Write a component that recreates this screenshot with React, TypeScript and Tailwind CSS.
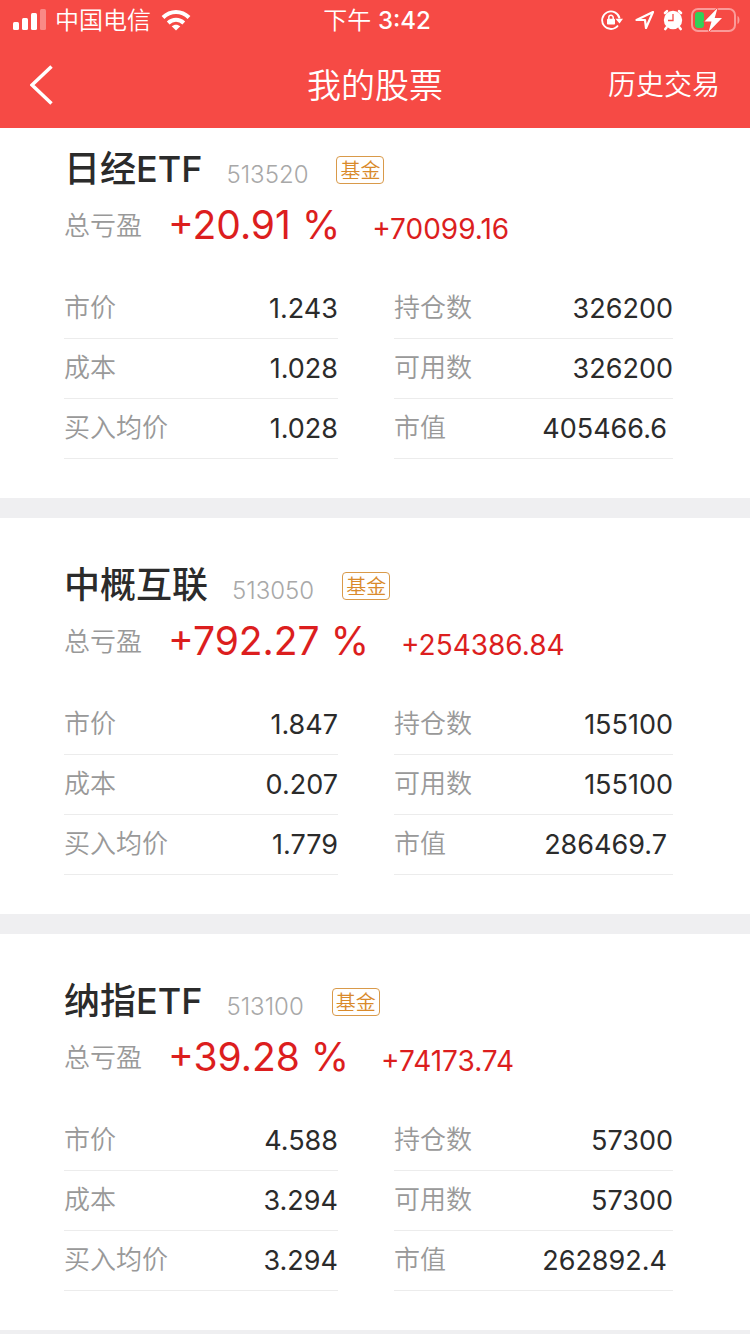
import React from 'react';

type Holding = {
  name: string;
  code: string;
  percent: string;
  profit: string;
  price: string;
  cost: string;
  average: string;
  position: string;
  available: string;
  value: string;
};

const holdings: Holding[] = [
  {
    name: '日经ETF', code: '513520', percent: '+20.91 %', profit: '+70099.16',
    price: '1.243', cost: '1.028', average: '1.028',
    position: '326200', available: '326200', value: '405466.6',
  },
  {
    name: '中概互联', code: '513050', percent: '+792.27 %', profit: '+254386.84',
    price: '1.847', cost: '0.207', average: '1.779',
    position: '155100', available: '155100', value: '286469.7',
  },
  {
    name: '纳指ETF', code: '513100', percent: '+39.28 %', profit: '+74173.74',
    price: '4.588', cost: '3.294', average: '3.294',
    position: '57300', available: '57300', value: '262892.4',
  },
];

const SignalIcon = () => (
  <svg width="34" height="22" viewBox="0 0 34 22" fill="#fff" aria-hidden="true">
    <rect x="0" y="13" width="6" height="8" rx="1.5" />
    <rect x="9" y="9" width="6" height="12" rx="1.5" />
    <rect x="18" y="4" width="6" height="17" rx="1.5" />
    <rect x="27" y="0" width="6" height="21" rx="1.5" opacity="0.35" />
  </svg>
);

const WifiIcon = () => (
  <svg width="30" height="22" viewBox="0 0 30 22" fill="none" stroke="#fff" strokeWidth="4" aria-hidden="true">
    <path d="M2 8.5C9.5 1.2 20.5 1.2 28 8.5" />
    <path d="M7.2 14C11.8 9.8 18.2 9.8 22.8 14" />
    <path d="M15 21.5l-4.3-4.3c2.5-2.1 6.1-2.1 8.6 0z" fill="#fff" stroke="none" />
  </svg>
);

const RotationLockIcon = () => (
  <svg width="22" height="20" viewBox="0 0 22 20" fill="none" stroke="#fff" strokeWidth="1.8" aria-hidden="true">
    <path d="M17 15.5A8.8 8.800 0 1 1 18.600 8.500" />
    <path d="M14.500 8.800h7.500l-3.500 4.600z" fill="#fff" stroke="none" />
    <rect x="6" y="8.800" width="8" height="5.800" rx="0.800" fill="#fff" stroke="none" />
    <path d="M7.800 9.500V7.500a2.200 2.200 0 0 1 4.400 0v2" strokeWidth="1.500" />
  </svg>
);

const LocationIcon = () => (
  <svg width="20" height="20" viewBox="0 0 20 20" fill="none" stroke="#fff" strokeWidth="2.2" strokeLinejoin="round" aria-hidden="true">
    <path d="M18 2L1.500 10h8.500l1 8z" />
  </svg>
);

const AlarmIcon = () => (
  <svg width="20" height="22" viewBox="0 0 20 22" aria-hidden="true">
    <circle cx="10" cy="11" r="9.2" fill="#fff" />
    <path d="M2 4L4 2.200M18 4L16 2.200M3.500 18.500l-1.200 1.500M16.500 18.500l1.200 1.500" stroke="#fff" strokeWidth="2.600" strokeLinecap="round" />
    <path d="M10 5V11.500H5" fill="none" stroke="#f64a45" strokeWidth="1.300" />
  </svg>
);

const BatteryIcon = () => (
  <svg width="50" height="24" viewBox="0 0 50 24" aria-hidden="true">
    <rect x="1" y="1" width="43" height="22" rx="6" fill="none" stroke="#fff" strokeWidth="2" opacity="0.45" />
    <path d="M46.500 8c2.600 1 2.600 7 0 8z" fill="#fff" opacity="0.45" />
    <rect x="4" y="4" width="9" height="16" rx="3" fill="#32d158" />
    <path d="M26.500 0L13.500 13.500h7L17.500 24 31 10h-7.300z" fill="#fff" stroke="#f64a45" strokeWidth="1.500" paintOrder="stroke" />
  </svg>
);

const StatusBar = () => (
  <div className="grid h-10 grid-cols-[1fr_auto_1fr] items-center pl-[13px] pr-[9px] text-[24px]">
    <div className="flex items-center">
      <SignalIcon />
      <span className="ml-2 mr-2.5 pt-0.5 font-[350]">中国电信</span>
      <WifiIcon />
    </div>
    <span className="pt-0.5 font-[350]">
      下午 <span className="font-medium">3:42</span>
    </span>
    <div className="flex items-center justify-end gap-2">
      <span className="mr-1">
        <RotationLockIcon />
      </span>
      <LocationIcon />
      <AlarmIcon />
      <BatteryIcon />
    </div>
  </div>
);

const Row = ({ label, value, inset = false }: { label: string; value: string; inset?: boolean }) => (
  <div className="border-b border-[#ececec]">
    <div className="flex h-[59px] items-center justify-between">
      <dt className="pb-0.5 text-[26px] font-[350] text-[#999]">{label}</dt>
      <dd className={inset ? 'pr-1.5 pt-0.5 text-[27px]' : 'pt-0.5 text-[27px]'}>{value}</dd>
    </div>
  </div>
);

const HoldingCard = ({ item }: { item: Holding }) => (
  <section className="border-b-20 border-[#efeff1] bg-white pb-[39px] pl-16 pr-[77px] pt-10 first:pt-3.5 last:border-b-4">
    <div className="flex h-[52px] items-center">
      <h2 className="pt-0.5 text-[36px] font-medium">{item.name}</h2>
      <span className="ml-6 pt-3.5 text-[24px] font-light text-[#a8a8a8]">{item.code}</span>
      <span className="ml-7 mt-1 flex h-7 items-center rounded border border-[#d99a4a] px-[3px] pt-0.5 text-[20px] font-[350] text-[#d98a2b]">
        基金
      </span>
    </div>
    <div className="flex h-[60px] items-center text-[#dc1e1e]">
      <span className="pt-0.5 text-[26px] font-[350] text-[#999]">总亏盈</span>
      <span className="ml-[26px] pt-0.5 text-[39px]">{item.percent}</span>
      <span className="ml-8 pt-2.5 text-[28px]">{item.profit}</span>
    </div>
    <div className="mt-[25px] grid grid-cols-[274fr_279fr] gap-14">
      <dl>
        <Row label="市价" value={item.price} />
        <Row label="成本" value={item.cost} />
        <Row label="买入均价" value={item.average} />
      </dl>
      <dl>
        <Row label="持仓数" value={item.position} />
        <Row label="可用数" value={item.available} />
        <Row label="市值" value={item.value} inset />
      </dl>
    </div>
  </section>
);

export default function App() {
  return (
    <div className="bg-white font-['Inter','Noto_Sans_CJK_SC',sans-serif] text-[#2b2b2b]">
      <header className="bg-[#f64a45] text-white">
        <StatusBar />
        <nav className="grid h-[88px] grid-cols-[1fr_auto_1fr] items-center px-[30px] pt-0.5">
          <button type="button" aria-label="返回" className="justify-self-start">
            <svg width="24" height="40" viewBox="0 0 24 40" fill="none" stroke="#fff" strokeWidth="3.5">
              <path d="M21.500 1.500L2 20l19.500 18.500" />
            </svg>
          </button>
          <h1 className="text-[34px] font-[350]">我的股票</h1>
          <a href="#history" className="justify-self-end text-[28px] font-[350]">历史交易</a>
        </nav>
      </header>
      <main>
        {holdings.map((item) => (
          <HoldingCard key={item.code} item={item} />
        ))}
      </main>
    </div>
  );
}
